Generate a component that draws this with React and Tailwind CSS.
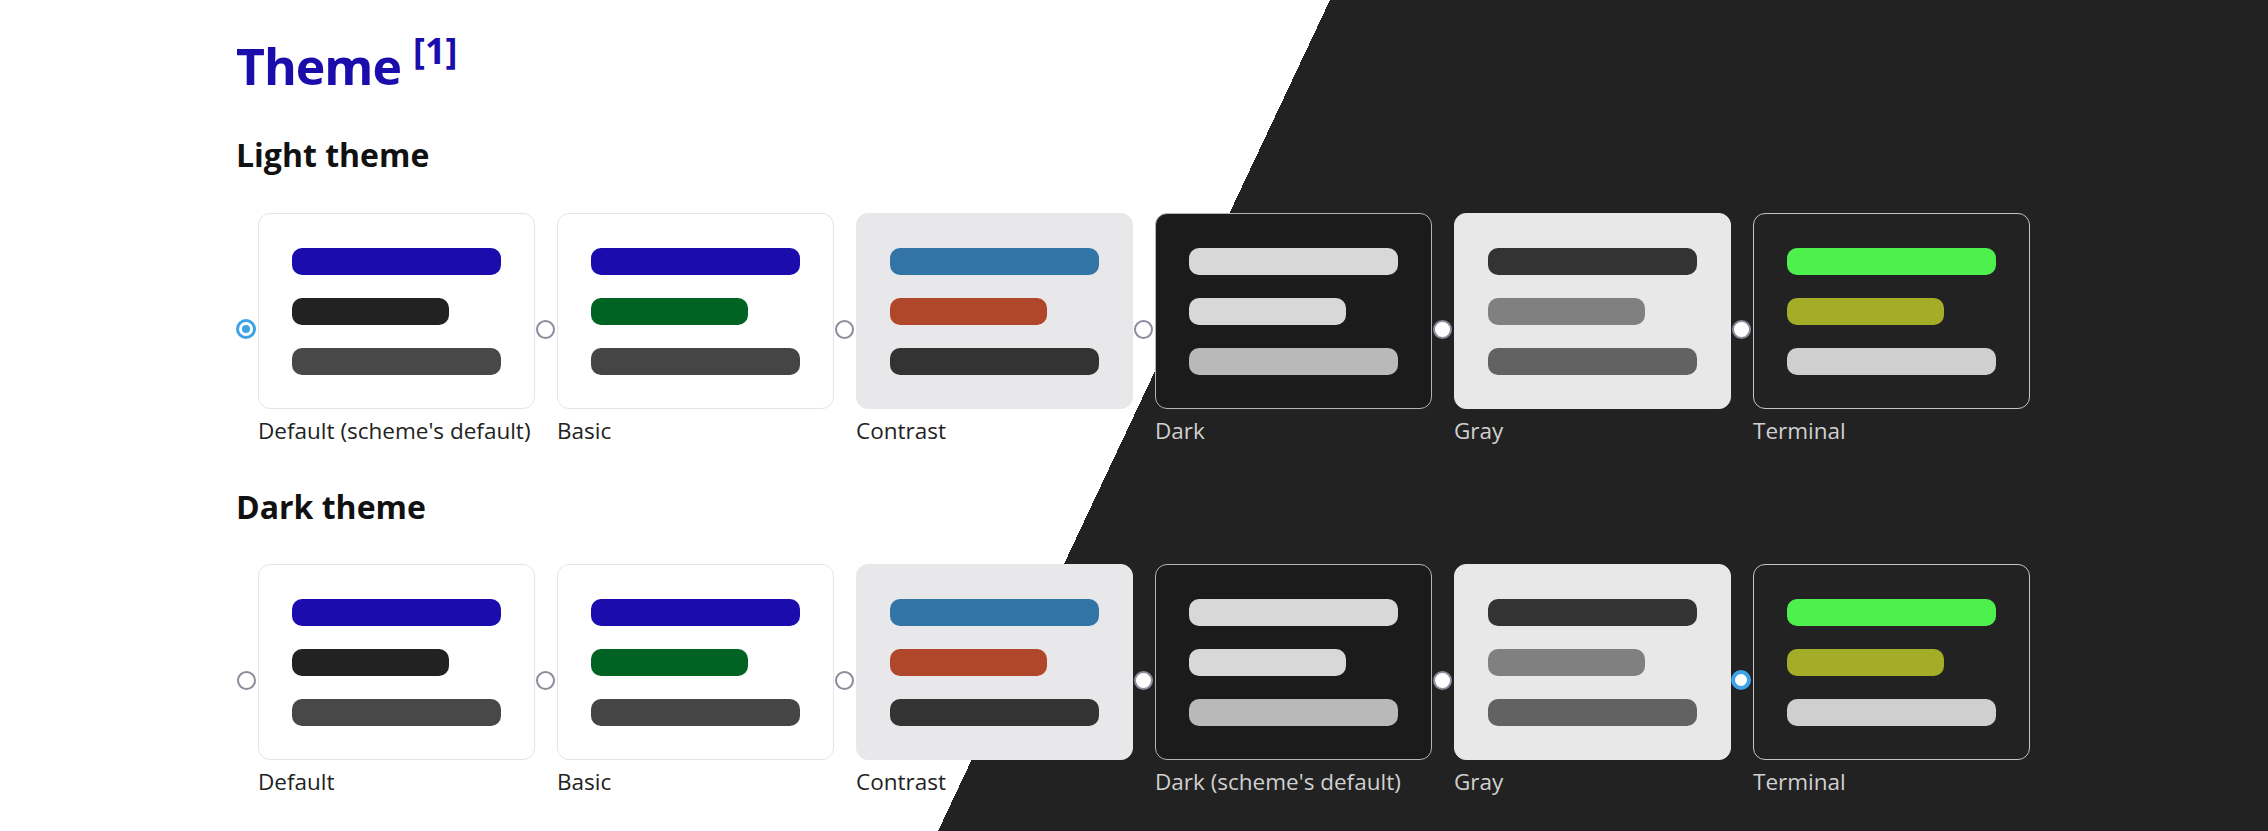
import React from "react";

const FONT = { fontFamily: '"Open Sans", "Noto Sans", sans-serif' };

const lightRow = [
  { label: "Default (scheme's default)", kind: "default" },
  { label: "Basic", kind: "basic" },
  { label: "Contrast", kind: "contrast" },
  { label: "Dark", kind: "dark" },
  { label: "Gray", kind: "gray" },
  { label: "Terminal", kind: "terminal" },
];

const darkRow = [
  { label: "Default", kind: "default" },
  { label: "Basic", kind: "basic" },
  { label: "Contrast", kind: "contrast" },
  { label: "Dark (scheme's default)", kind: "dark" },
  { label: "Gray", kind: "gray" },
  { label: "Terminal", kind: "terminal" },
];

const cardStyles = {
  default: {
    card: "bg-white border-[#e4e4ea]",
    bars: ["bg-[#1a0cad]", "bg-[#222222]", "bg-[#484848]"],
    text: "text-[#222222]",
  },
  basic: {
    card: "bg-white border-[#e4e4ea]",
    bars: ["bg-[#1a0cad]", "bg-[#006323]", "bg-[#454545]"],
    text: "text-[#222222]",
  },
  contrast: {
    card: "bg-[#e8e8ea] border-[#e8e8ea]",
    bars: ["bg-[#3374a6]", "bg-[#b0472b]", "bg-[#333333]"],
    text: "text-[#222222]",
  },
  dark: {
    card: "bg-[#1b1b1b] border-[#b4b4b4]",
    bars: ["bg-[#d8d8d8]", "bg-[#d8d8d8]", "bg-[#b9b9b9]"],
    text: "text-[#d0d0d0]",
  },
  gray: {
    card: "bg-[#e8e8e8] border-[#e8e8e8]",
    bars: ["bg-[#333333]", "bg-[#808080]", "bg-[#626262]"],
    text: "text-[#d0d0d0]",
  },
  terminal: {
    card: "bg-[#222222] border-[#c4c4c4]",
    bars: ["bg-[#4ef04e]", "bg-[#a3ad28]", "bg-[#cfcfcf]"],
    text: "text-[#d0d0d0]",
  },
};

function Radio({ selected, onDark }) {
  if (selected && onDark) {
    return (
      <div className="w-[20px] h-[20px] rounded-full border-[4px] border-[#3ba3e6] bg-white" />
    );
  }
  if (selected) {
    return (
      <div className="w-[20px] h-[20px] rounded-full border-[3px] border-[#3ba3e6] bg-white flex items-center justify-center">
        <div className="w-[8px] h-[8px] rounded-full bg-[#3ba3e6]" />
      </div>
    );
  }
  return (
    <div className="w-[19px] h-[19px] rounded-full border-[2.5px] border-[#8e8c9c] bg-white" />
  );
}

function Card({ kind }) {
  const s = cardStyles[kind];
  return (
    <div
      className={`w-[277px] h-[196px] rounded-[12px] border-[1.5px] flex flex-col justify-center gap-[23px] pl-[32.5px] ${s.card}`}
    >
      <div className={`w-[209px] h-[27px] rounded-[10px] ${s.bars[0]}`} />
      <div className={`w-[157px] h-[27px] rounded-[10px] ${s.bars[1]}`} />
      <div className={`w-[209px] h-[27px] rounded-[10px] ${s.bars[2]}`} />
    </div>
  );
}

function Row({ items, selected }) {
  return (
    <div className="flex">
      {items.map((it, i) => (
        <div key={i} className="flex w-[299px] shrink-0">
          <div className="w-[22px] pt-[106px]">
            <div className="w-[20px] h-[20px] flex items-center justify-center">
              <Radio selected={i === selected} onDark={i >= 3} />
            </div>
          </div>
          <div className="flex flex-col">
            <Card kind={it.kind} />
            <div
              className={`mt-[9px] text-[22.5px] leading-[26px] whitespace-nowrap ${cardStyles[it.kind].text}`}
            >
              {it.label}
            </div>
          </div>
        </div>
      ))}
    </div>
  );
}

export default function App() {
  return (
    <div
      className="w-full h-[831px] overflow-hidden bg-[linear-gradient(115.25deg,#ffffff_50%,#222222_50%)]"
      style={FONT}
    >
      <div className="pl-[236px] pt-[39px]">
        <h1 className="h-[54px] text-[50px] leading-[54px] font-bold text-[#1a0dab] whitespace-nowrap tracking-[-1px]">
          Theme{" "}
          <span className="relative top-[-21px] text-[36px] leading-none tracking-normal">
            [1]
          </span>
        </h1>
        <h2 className="mt-[46px] text-[32px] leading-[32px] font-bold text-[#111111]">
          Light theme
        </h2>
        <div className="mt-[42px]">
          <Row items={lightRow} selected={0} />
        </div>
        <h2 className="mt-[47px] text-[32px] leading-[32px] font-bold text-[#111111]">
          Dark theme
        </h2>
        <div className="mt-[41px]">
          <Row items={darkRow} selected={5} />
        </div>
      </div>
    </div>
  );
}
